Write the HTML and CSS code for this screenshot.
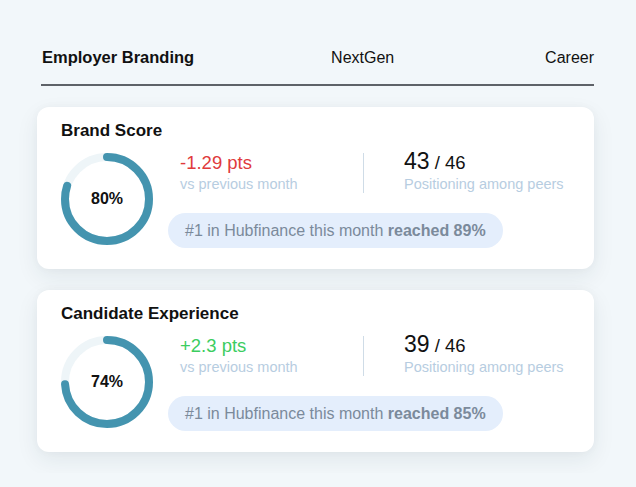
FILE: index.html
```html
<!DOCTYPE html>
<html lang="en">
<head>
<meta charset="utf-8">
<title>Employer Branding</title>
<link rel="stylesheet" href="styles.css">
</head>
<body>
<div class="page">
  <nav class="tabs">
    <span class="tab tab-active">Employer Branding</span>
    <span class="tab tab-middle">NextGen</span>
    <span class="tab">Career</span>
  </nav>

  <section class="card">
    <h2 class="card-title">Brand Score</h2>
    <div class="card-body">
      <div class="ring">
        <svg class="ring-svg" width="92" height="92" viewBox="0 0 92 92">
          <circle class="ring-track" cx="46" cy="46" r="42"/>
          <circle class="ring-arc" cx="46" cy="46" r="42" stroke-dasharray="211.1 263.9" transform="rotate(-90 46 46)"/>
        </svg>
        <span class="ring-label">80%</span>
      </div>
      <div class="info">
        <div class="stats">
          <div class="stat stat-delta">
            <div class="value negative">-1.29 pts</div>
            <div class="label">vs previous month</div>
          </div>
          <div class="divider"></div>
          <div class="stat stat-rank">
            <div class="value rank"><span class="rank-main">43</span> / 46</div>
            <div class="label">Positioning among peers</div>
          </div>
        </div>
        <div class="pill">#1 in Hubfinance this month <strong>reached 89%</strong></div>
      </div>
    </div>
  </section>

  <section class="card">
    <h2 class="card-title">Candidate Experience</h2>
    <div class="card-body">
      <div class="ring">
        <svg class="ring-svg" width="92" height="92" viewBox="0 0 92 92">
          <circle class="ring-track" cx="46" cy="46" r="42"/>
          <circle class="ring-arc" cx="46" cy="46" r="42" stroke-dasharray="195.3 263.9" transform="rotate(-90 46 46)"/>
        </svg>
        <span class="ring-label">74%</span>
      </div>
      <div class="info">
        <div class="stats">
          <div class="stat stat-delta">
            <div class="value positive">+2.3 pts</div>
            <div class="label">vs previous month</div>
          </div>
          <div class="divider"></div>
          <div class="stat stat-rank">
            <div class="value rank"><span class="rank-main">39</span> / 46</div>
            <div class="label">Positioning among peers</div>
          </div>
        </div>
        <div class="pill">#1 in Hubfinance this month <strong>reached 85%</strong></div>
      </div>
    </div>
  </section>
</div>
</body>
</html>
```
FILE: styles.css
```css
* { box-sizing: border-box; }

html, body {
  margin: 0;
  padding: 0;
  background: #f2f7fa;
  font-family: "Liberation Sans", Arial, sans-serif;
  color: #111;
}

.page {
  width: 636px;
  padding: 48px 42px 0 37px;
}

.tabs {
  margin-left: 4px;
  display: flex;
  justify-content: space-between;
  padding-bottom: 17px;
  border-bottom: 2px solid #5e6268;
  margin-bottom: 21px;
}

.tab {
  font-size: 16px;
  line-height: 19px;
  color: #111;
}

.tab-middle {
  margin-right: 14px;
}

.tab-active {
  font-weight: 700;
  font-size: 16.5px;
  margin-left: 1px;
}

.card {
  background: #fff;
  border-radius: 12px;
  padding: 14px 24px 21px 24px;
  margin-bottom: 21px;
  box-shadow: 0 8px 22px rgba(30, 50, 70, 0.08), 0 0 8px rgba(30, 50, 70, 0.03);
}

.card-title {
  margin: 0 0 11px 0;
  font-size: 17px;
  line-height: 20px;
  font-weight: 700;
  color: #111;
}

.card-body {
  display: flex;
  align-items: flex-start;
}

.ring {
  display: grid;
  width: 92px;
  height: 92px;
  margin-top: 1px;
  flex: none;
}

.ring-svg,
.ring-label {
  grid-area: 1 / 1;
}

.ring-track {
  fill: none;
  stroke: #eef5f8;
  stroke-width: 8;
}

.ring-arc {
  fill: none;
  stroke: #4494af;
  stroke-width: 8;
  stroke-linecap: round;
}

.ring-label {
  align-self: center;
  justify-self: center;
  font-size: 16px;
  font-weight: 700;
  color: #111;
}

.info {
  margin-left: 15px;
  display: flex;
  flex-direction: column;
  align-items: flex-start;
}

.stats {
  display: flex;
  align-items: center;
}

.stat-delta {
  width: 195px;
  padding-left: 12px;
}

.stat-rank {
  padding-left: 40px;
}

.divider {
  width: 1px;
  height: 40px;
  background: #cfdce7;
}

.value {
  font-size: 18.5px;
  line-height: 21px;
  margin-top: -1px;
}

.negative { color: #e03a3c; }
.positive { color: #3ccd5f; }

.rank {
  color: #111;
}

.rank-main {
  font-size: 23px;
}

.label {
  margin-top: 2px;
  font-size: 14.5px;
  line-height: 19px;
  color: #b7cde1;
}

.pill {
  margin-top: 19px;
  height: 35px;
  display: flex;
  align-items: center;
  padding: 0 17px;
  border-radius: 18px;
  background: #e4eefc;
  color: #7b8a9b;
  font-size: 16px;
  white-space: pre;
}

.pill strong {
  font-weight: 700;
}
```
